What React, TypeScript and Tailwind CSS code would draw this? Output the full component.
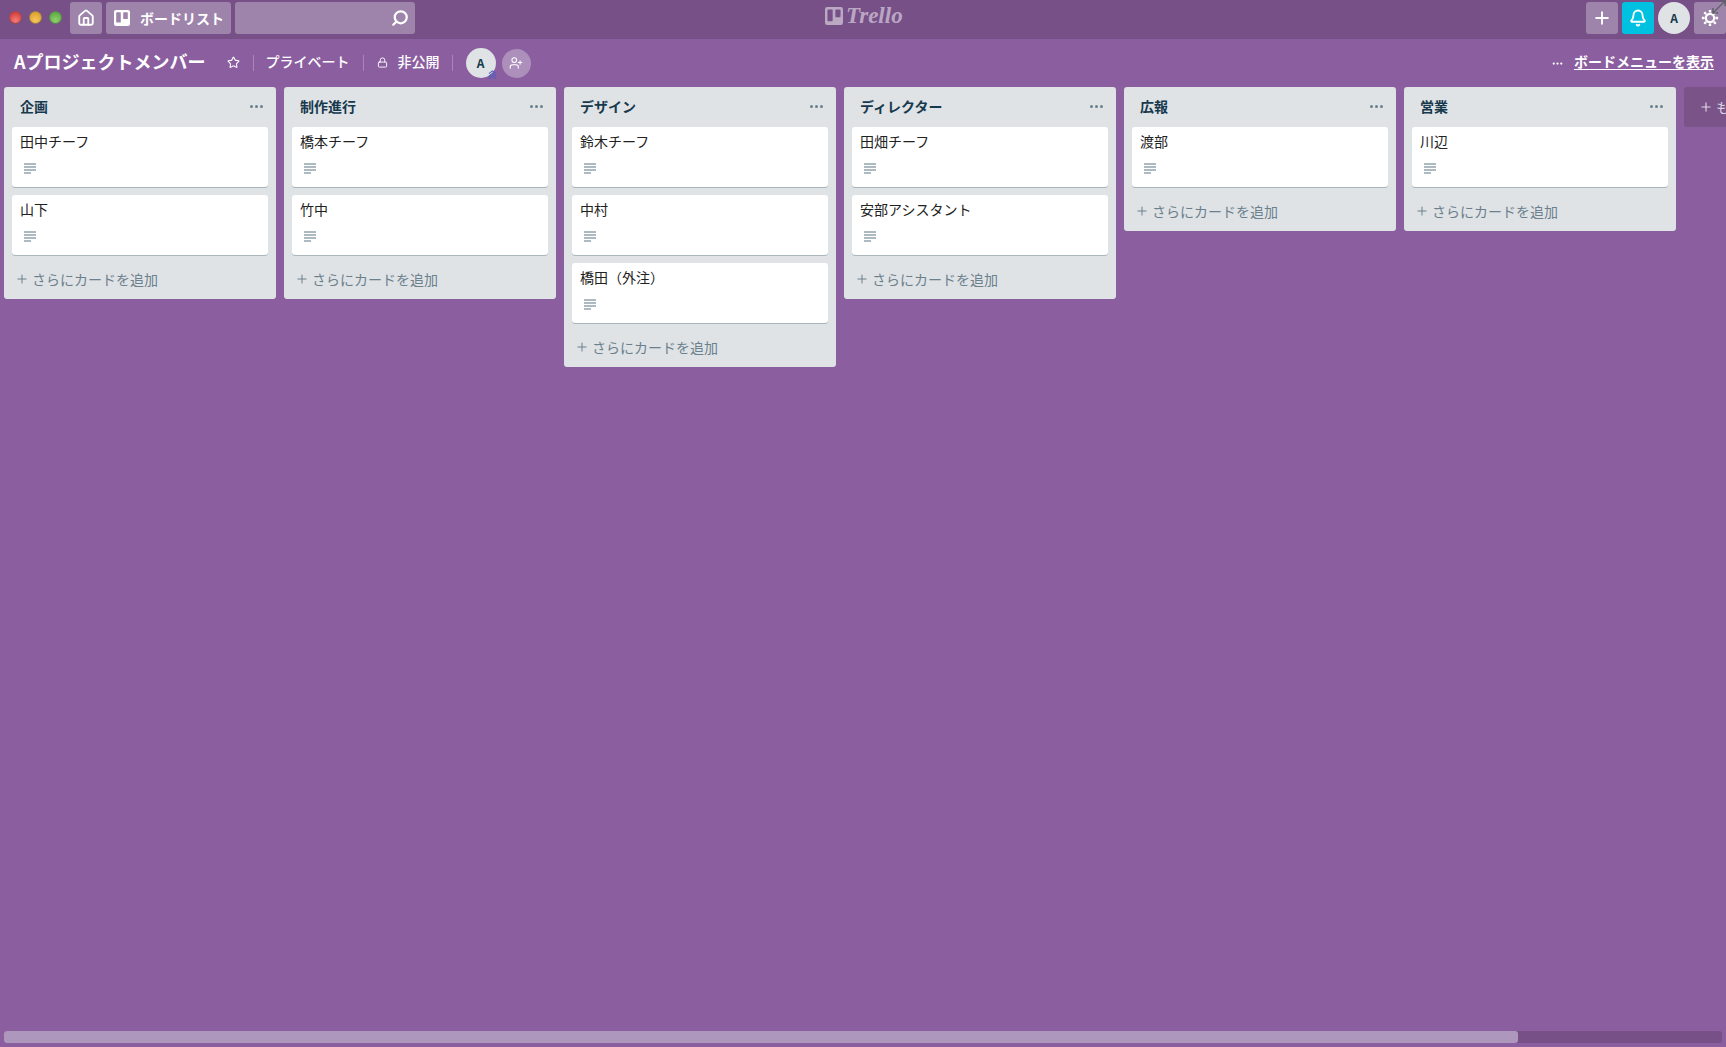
import { Bell, Home, Lock, Plus, Search, Star, UserPlus } from 'lucide-react';

const lists = [
  { title: '企画', cards: ['田中チーフ', '山下'] },
  { title: '制作進行', cards: ['橋本チーフ', '竹中'] },
  { title: 'デザイン', cards: ['鈴木チーフ', '中村', '橋田（外注）'] },
  { title: 'ディレクター', cards: ['田畑チーフ', '安部アシスタント'] },
  { title: '広報', cards: ['渡部'] },
  { title: '営業', cards: ['川辺'] },
];

function BoardIcon({ className }: { className: string }) {
  return (
    <svg viewBox="0 0 16 16" className={className} fill="currentColor">
      <path
        fillRule="evenodd"
        d="M2 0h12a2 2 0 0 1 2 2v12a2 2 0 0 1-2 2H2a2 2 0 0 1-2-2V2a2 2 0 0 1 2-2zm.8 2.2a.6.6 0 0 0-.6.6v9.2c0 .3.3.6.6.6h3.4a.6.6 0 0 0 .6-.6V2.8a.6.6 0 0 0-.6-.6zm7 0a.6.6 0 0 0-.6.6v5.6c0 .3.3.6.6.6h3.4a.6.6 0 0 0 .6-.6V2.8a.6.6 0 0 0-.6-.6z"
      />
    </svg>
  );
}

function GearIcon() {
  return (
    <svg viewBox="0 0 20 20" className="w-[18px] h-[18px]" fill="none" stroke="currentColor">
      <circle cx="10" cy="10" r="4.6" strokeWidth="2.4" />
      <path
        d="M10 1v3M10 16v3M1 10h3M16 10h3M3.6 3.6l2.1 2.1M14.3 14.3l2.1 2.1M3.6 16.4l2.1-2.1M14.3 5.7l2.1-2.1"
        strokeWidth="2.6"
      />
    </svg>
  );
}

function DescIcon() {
  return (
    <svg viewBox="0 0 12 12" className="w-3 h-3 text-[#5f7685]" fill="currentColor">
      <rect x="0" y="0.5" width="12" height="1" />
      <rect x="0" y="3.5" width="12" height="1" />
      <rect x="0" y="6.5" width="12" height="1" />
      <rect x="0" y="9.5" width="7" height="1" />
    </svg>
  );
}

function Dots({ className }: { className: string }) {
  return (
    <div className={`flex gap-[2px] ${className}`}>
      <span className="w-[3px] h-[3px] rounded-full bg-current" />
      <span className="w-[3px] h-[3px] rounded-full bg-current" />
      <span className="w-[3px] h-[3px] rounded-full bg-current" />
    </div>
  );
}

function BoardList({ title, cards }: { title: string; cards: string[] }) {
  return (
    <div className="w-[272px] shrink-0 self-start bg-[#dfe3e6] rounded-[3px]">
      <div className="h-10 pb-[2px] pl-[16px] pr-[13px] flex items-center justify-between">
        <h2 className="text-[14px] font-bold text-[#17394d] leading-5">{title}</h2>
        <Dots className="text-[#6b808c]" />
      </div>
      <div className="px-2 flex flex-col gap-2">
        {cards.map((card) => (
          <div key={card} className="h-[60px] bg-white rounded-[3px] shadow-[0_1px_0_#a9b6be] px-2 pt-[4px]">
            <div className="text-[14px] leading-5 text-[#222]">{card}</div>
            <div className="mt-[12px] pl-[4px]">
              <DescIcon />
            </div>
          </div>
        ))}
      </div>
      <div className="h-11 pt-[4px] pl-[11px] flex items-center gap-[3px] text-[14px] text-[#6b808c]">
        <Plus className="w-[14px] h-[14px]" strokeWidth={1.75} />
        <span>さらにカードを追加</span>
      </div>
    </div>
  );
}

export default function App() {
  return (
    <div className="w-full h-screen overflow-hidden flex flex-col bg-[#8b5e9f] text-white font-['Noto_Sans_CJK_JP','Liberation_Sans',sans-serif]">
      {/* top nav */}
      <header className="relative h-[39px] shrink-0 bg-[#765087] flex items-start pl-[9px] pt-[2px]">
        <div className="h-8 pb-[2px] flex items-center gap-[7px] w-[61px]">
          <span className="w-[13px] h-[13px] rounded-full bg-[radial-gradient(circle_at_50%_75%,#f47c78,#c9302c)] border border-[#a8494d]" />
          <span className="w-[13px] h-[13px] rounded-full bg-[radial-gradient(circle_at_50%_75%,#f6c65c,#d49a24)] border border-[#a98446]" />
          <span className="w-[13px] h-[13px] rounded-full bg-[radial-gradient(circle_at_50%_75%,#8ed06c,#54a03a)] border border-[#5e8a50]" />
        </div>
        <div className="w-[32px] h-8 rounded-[3px] bg-[#9e84ab] flex items-center justify-center">
          <Home className="w-[18px] h-[18px]" strokeWidth={2.5} />
        </div>
        <div className="ml-[4px] w-[125px] h-8 rounded-[3px] bg-[#9e84ab] flex items-center pl-[8px] gap-[10px]">
          <BoardIcon className="w-[16px] h-[16px] shrink-0" />
          <span className="text-[14px] font-bold whitespace-nowrap">ボードリスト</span>
        </div>
        <div className="ml-[4px] w-[180px] h-8 rounded-[3px] bg-[#9e84ab] flex items-center justify-end pr-[6px]">
          <Search className="w-[18px] h-[18px] -scale-x-100" strokeWidth={3} />
        </div>

        <div className="absolute left-[825px] top-[3px] flex items-center gap-[3px] text-white/50">
          <BoardIcon className="w-[18px] h-[18px]" />
          <span className="text-[23px] leading-[26px] italic font-bold font-['Liberation_Serif',serif]">Trello</span>
        </div>

        <div className="ml-auto flex items-center gap-[4px]">
          <div className="w-8 h-8 rounded-[3px] bg-[#9e84ab] flex items-center justify-center">
            <Plus className="w-[20px] h-[20px]" strokeWidth={2.25} />
          </div>
          <div className="w-8 h-8 rounded-[3px] bg-[#00c2e0] flex items-center justify-center">
            <Bell className="w-[18px] h-[18px]" strokeWidth={2.5} />
          </div>
          <div className="w-8 h-8 rounded-full bg-[#dfe3e6] text-[#17394d] text-[12px] font-bold flex items-center justify-center">
            A
          </div>
          <div className="w-[32px] h-8 rounded-[3px] bg-[#9e84ab] flex items-center justify-center">
            <GearIcon />
          </div>
        </div>
        <svg viewBox="0 0 14 14" className="absolute right-0 top-0 w-[14px] h-[14px] text-[#5f5f66]" fill="none" stroke="currentColor" strokeWidth="1.4">
          <path d="M1 13l11-11M8 1h5v5M1 8v5h5" />
        </svg>
      </header>

      {/* board title row */}
      <div className="h-[48px] shrink-0 flex items-center pl-[14px] pr-[12px]">
        <h1 className="mb-[4px] text-[18px] font-bold leading-6 whitespace-nowrap">Aプロジェクトメンバー</h1>
        <Star className="mb-[2px] ml-[21px] w-[13px] h-[13px]" strokeWidth={2} />
        <span className="ml-[13px] w-px h-4 bg-white/25" />
        <span className="mb-[4px] ml-[12px] text-[14px] font-medium whitespace-nowrap">プライベート</span>
        <span className="ml-[13px] w-px h-4 bg-white/25" />
        <Lock className="mb-[2px] ml-[13px] w-[11px] h-[11px]" strokeWidth={2} />
        <span className="mb-[4px] ml-[10px] text-[14px] font-medium whitespace-nowrap">非公開</span>
        <span className="ml-[12px] w-px h-4 bg-white/25" />
        <div className="relative ml-[13px] w-[30px] h-[30px] rounded-full bg-[#dfe3e6] text-[#17394d] text-[12px] font-bold flex items-center justify-center">
          A
          <svg viewBox="0 0 10 10" className="absolute right-[-1px] bottom-[-1px] w-[9px] h-[9px] text-[#4a5fc1]" fill="none" stroke="currentColor" strokeWidth="1.2">
            <path d="M1 4l4-3 4 3M1 7l4-3 4 3M1 10l4-3 4 3" />
          </svg>
        </div>
        <div className="ml-[6px] w-[29px] h-[29px] rounded-full bg-[#ad8fbb] flex items-center justify-center">
          <UserPlus className="w-[14px] h-[14px]" strokeWidth={1.75} />
        </div>
        <div className="ml-auto flex items-center gap-[10px]">
          <Dots className="text-white scale-75" />
          <span className="mb-[4px] text-[14px] font-bold underline underline-offset-2 whitespace-nowrap">ボードメニューを表示</span>
        </div>
      </div>

      {/* lists */}
      <main className="flex-1 min-h-0 overflow-hidden flex gap-2 pl-[4px]">
        {lists.map((list) => (
          <BoardList key={list.title} title={list.title} cards={list.cards} />
        ))}
        <div className="w-[272px] h-10 shrink-0 rounded-[3px] bg-[#7a5389] text-white/75 text-[14px] flex items-center pl-[15px] gap-[3px]">
          <Plus className="w-[14px] h-[14px]" strokeWidth={2} />
          <span className="whitespace-nowrap">もう1つリストを追加</span>
        </div>
      </main>

      {/* horizontal scrollbar */}
      <div className="h-[12px] shrink-0 mx-[4px] mb-[4px] rounded-[3px] bg-[#765087]">
        <div className="h-full w-[1514px] rounded-[3px] bg-[#ae97bd]" />
      </div>
    </div>
  );
}
